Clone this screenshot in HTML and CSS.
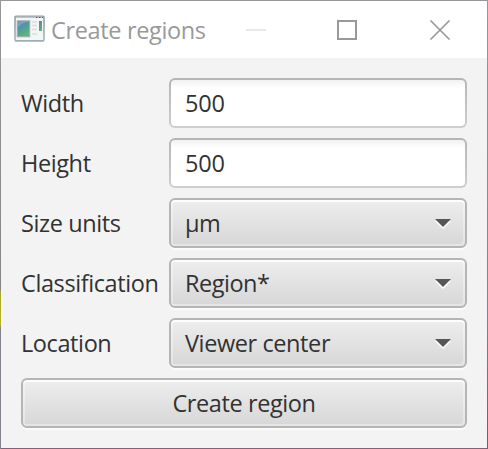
FILE: index.html
```
<!DOCTYPE html>
<html lang="en">
<head>
<meta charset="utf-8">
<title>Create regions</title>
<link rel="stylesheet" href="styles.css">
</head>
<body>
<div class="window">
  <header class="titlebar">
    <svg class="app-icon" width="31" height="27" viewBox="0 0 31 27">
      <defs>
        <linearGradient id="pane" x1="0" y1="0" x2="0.5" y2="1"><stop offset="0" stop-color="#5584ae"/><stop offset="0.5" stop-color="#5299a0"/><stop offset="1" stop-color="#62b478"/></linearGradient>
        <linearGradient id="frame" x1="0" y1="0" x2="0" y2="1"><stop offset="0" stop-color="#929da6"/><stop offset="1" stop-color="#a9b4bc"/></linearGradient>
      </defs>
      <rect x="1" y="1.2" width="29" height="24.5" rx="1" fill="#f4f5f5" stroke="url(#frame)" stroke-width="1.6"/>
      <path d="M2 2.2h27" stroke="#b8c0c6" stroke-width="1.4"/>
      <path d="M22 2.5h1.5M25 2.5h1.5M28 2.5h1" stroke="#59636b" stroke-width="1.2"/>
      <rect x="3.2" y="5.8" width="12.6" height="16" fill="url(#pane)" stroke="#a4afb7" stroke-width="1"/>
      <path d="M4 12Q9 7 15 7V6.5H4Z" fill="#fff" opacity=".2"/>
      <path d="M18 7h5M18 10.5h5M18 14.5h5M18 19h5" stroke="#d9dcdd" stroke-width="1.6"/>
      <rect x="25" y="6" width="3" height="10" fill="url(#pane)"/>
      <path d="M1 26h29" stroke="#9ba6ae" stroke-width="1"/>
    </svg>
    <h1 class="title">Create regions</h1>
    <svg class="controls" width="206" height="24" viewBox="0 0 206 24" fill="none">
      <path d="M0 12h20" stroke="#e9e9e9" stroke-width="2"/>
      <rect x="92" y="3" width="18" height="18" stroke="#999" stroke-width="2"/>
      <path d="M184.5 2.5l19 19M203.5 2.5l-19 19" stroke="#999" stroke-width="1.7"/>
    </svg>
  </header>
  <main class="form">
    <div class="row"><span class="label">Width</span><div class="control field">500</div></div>
    <div class="row"><span class="label">Height</span><div class="control field">500</div></div>
    <div class="row"><span class="label">Size units</span><div class="control raised tight">µm<svg class="arrow" width="16" height="10" viewBox="0 0 16 10"><path d="M0 2h16L8 10Z" fill="#fff"/><path d="M0 0h16L8 8Z" fill="#555655"/></svg></div></div>
    <div class="row"><span class="label">Classification</span><div class="control raised tight">Region*<svg class="arrow" width="16" height="10" viewBox="0 0 16 10"><path d="M0 2h16L8 10Z" fill="#fff"/><path d="M0 0h16L8 8Z" fill="#555655"/></svg></div></div>
    <div class="row"><span class="label">Location</span><div class="control raised">Viewer center<svg class="arrow" width="16" height="10" viewBox="0 0 16 10"><path d="M0 2h16L8 10Z" fill="#fff"/><path d="M0 0h16L8 8Z" fill="#555655"/></svg></div></div>
    <button class="raised submit">Create region</button>
  </main>
</div>
</body>
</html>
```
FILE: styles.css
```
* { box-sizing: border-box; }
body {
  margin: 0;
  overflow: hidden;
  font: 23.5px/32px "Open Sans", "Noto Sans", sans-serif;
  letter-spacing: -0.4px;
  color: #323232;
}
.window {
  width: 488px;
  height: 449px;
  padding: 1px;
  background:
    linear-gradient(#96969b 0, #85858a 290px, #a9a52c 291px, #b9b51c 325px, #85808b 328px, #85808b 449px) left / 1px 100% no-repeat,
    linear-gradient(#96969b, #85808b 70%, #85506a) right / 1px 100% no-repeat,
    linear-gradient(#96969b, #96969b) top / 100% 1px no-repeat,
    #85607a;
}
.titlebar {
  display: flex;
  align-items: center;
  height: 57px;
  padding-left: 13px;
  background: #fff;
}
.app-icon { display: block; margin-bottom: 2px; }
.title {
  width: 195px;
  margin: 0 0 0 6px;
  font-size: 23.5px;
  font-weight: 400;
  letter-spacing: -0.35px;
  color: #999;
  white-space: nowrap;
}
.controls { display: block; }
.form {
  display: flex;
  flex-direction: column;
  gap: 10px;
  height: 390px;
  padding: 20px;
  background: #f3f3f3;
}
.row { display: flex; height: 50px; }
.label {
  display: flex;
  align-items: center;
  width: 148px;
  white-space: nowrap;
}
.control {
  display: flex;
  align-items: center;
  justify-content: space-between;
  flex: 1;
}
.field {
  padding: 0 14px;
  border: 2px solid transparent;
  border-radius: 6px;
  letter-spacing: -0.2px;
  background: linear-gradient(#f1f1f1, #fff 8px) padding-box, linear-gradient(#b5b5b5, #cecece) border-box;
}
.raised {
  padding: 0 14px;
  border: 2px solid #b5b5b5;
  border-radius: 6px;
  background: linear-gradient(#eee, #d7d7d7);
  box-shadow: inset 0 2px #fdfdfd, inset 2px 0 rgba(255,255,255,.35), inset -2px -2px rgba(255,255,255,.35), 0 2px #fbfbfb;
}
.tight { letter-spacing: -0.5px; }
.submit {
  height: 50px;
  font: inherit;
  letter-spacing: inherit;
  color: inherit;
}
.arrow { display: block; margin-top: 2px; }
```
